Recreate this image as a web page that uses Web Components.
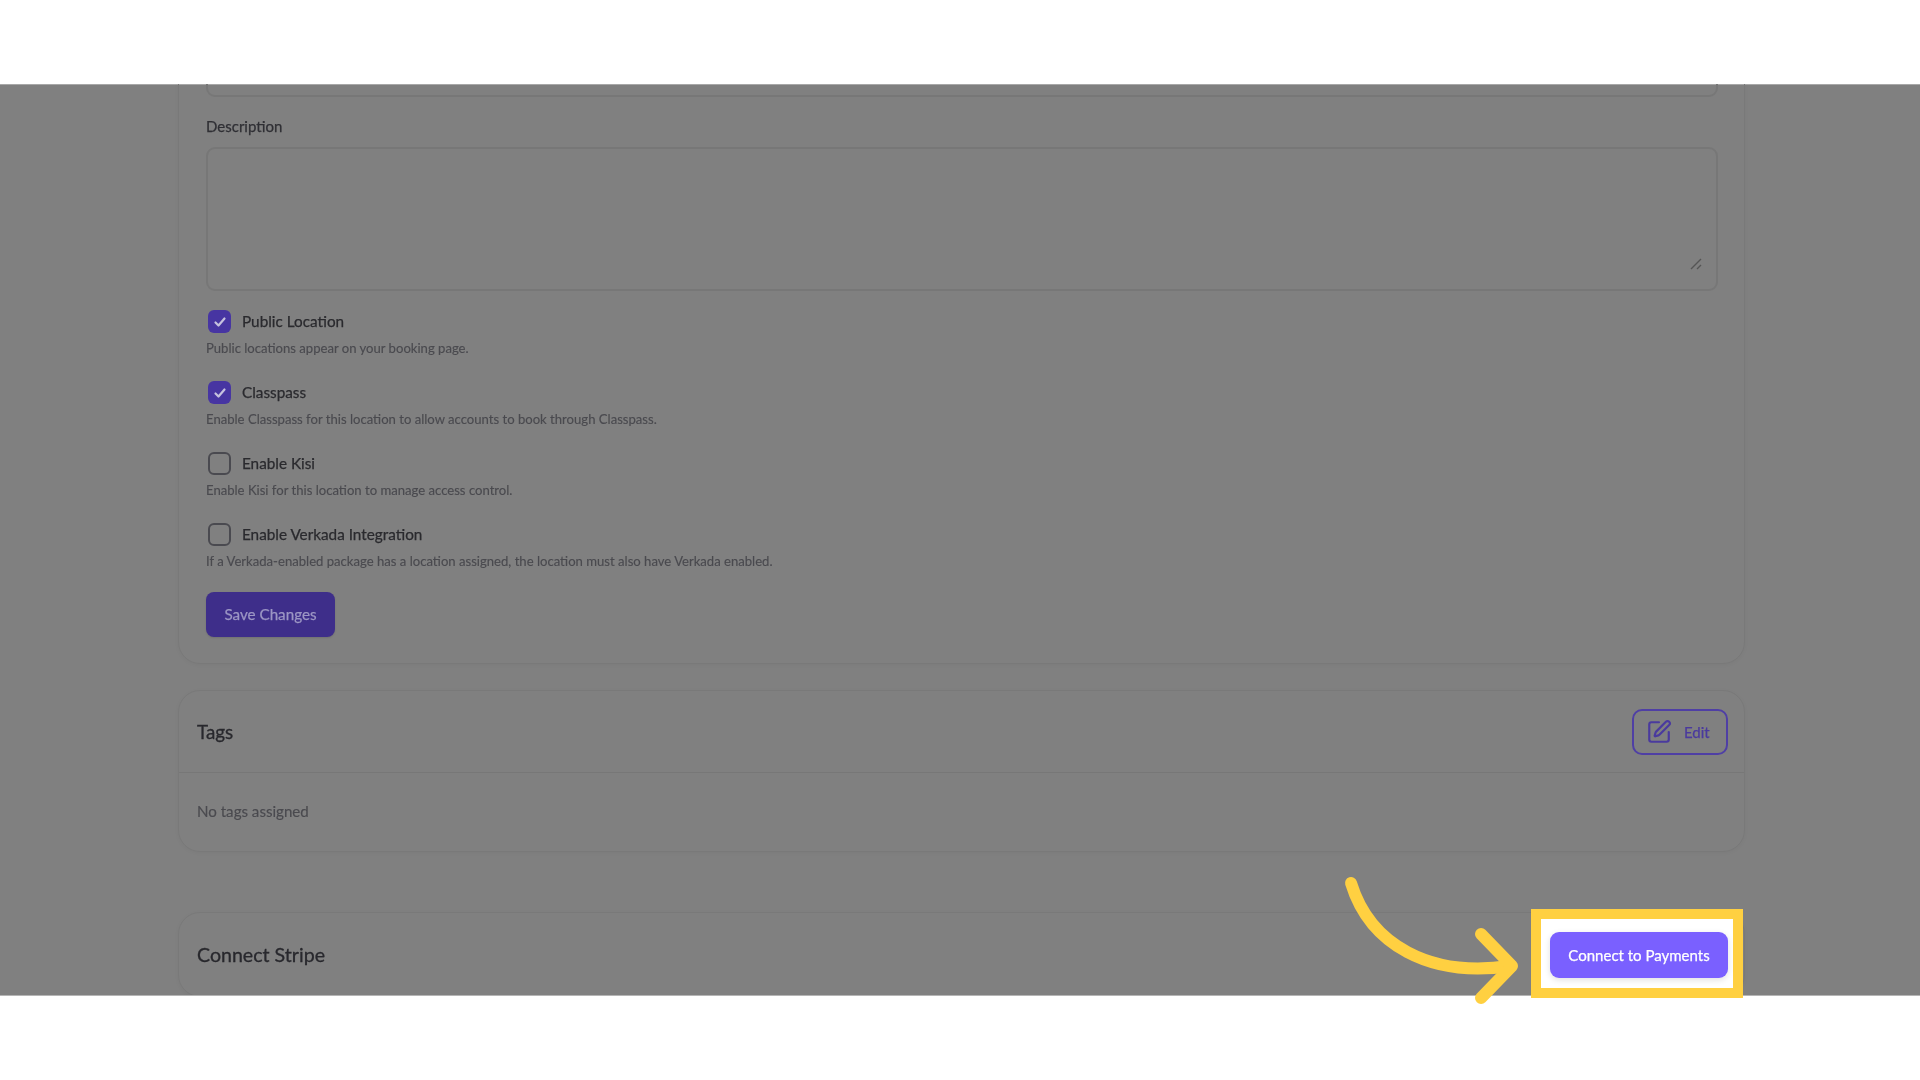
<!DOCTYPE html>
<html>
<head>
<meta charset="utf-8">
<title>Location settings</title>
<style>
    html, body { margin: 0; padding: 0; background: #fff; }
    body { font-family: 'Lato', 'Liberation Sans', sans-serif; }
</style>
</head>
<body>
<app-frame>
    <settings-card first>
        <text-field></text-field>
        <area-field label="Description"></area-field>
        <check-row checked label="Public Location" hint="Public locations appear on your booking page." style="margin-top:19px"></check-row>
        <check-row checked label="Classpass" hint="Enable Classpass for this location to allow accounts to book through Classpass."></check-row>
        <check-row label="Enable Kisi" hint="Enable Kisi for this location to manage access control."></check-row>
        <check-row label="Enable Verkada Integration" hint="If a Verkada-enabled package has a location assigned, the location must also have Verkada enabled."></check-row>
        <save-button>Save Changes</save-button>
    </settings-card>
    <section-card heading="Tags" style="margin-top:26px">
        <edit-button slot="action">Edit</edit-button>
        No tags assigned
    </section-card>
    <section-card heading="Connect Stripe" big style="margin-top:60px"></section-card>
    <tour-spotlight slot="overlay">Connect to Payments</tour-spotlight>
</app-frame>

<script>
class AppFrame extends HTMLElement {
    constructor() {
        super();
        this.attachShadow({ mode: 'open' });
        this.shadowRoot.innerHTML = `
            <style>
                :host {
                    display: flex;
                    flex-direction: column;
                    position: relative;
                    width: 1920px;
                    height: 1080px;
                    overflow: hidden;
                    background: #fff;
                }
                .gap-top { height: 84px; flex: none; }
                .dim {
                    height: 911px;
                    flex: none;
                    overflow: hidden;
                    background: #808080;
                    box-shadow: inset 0 1px 0 #a8a8a8, 0 1px 0 #b5b5b5;
                    padding: 0 175px 0 178px;
                    box-sizing: border-box;
                    filter: blur(0.7px);
                }
            </style>
            <div class="gap-top"></div>
            <div class="dim"><slot></slot></div>
            <slot name="overlay"></slot>
        `;
    }
}

class SettingsCard extends HTMLElement {
    constructor() {
        super();
        this.attachShadow({ mode: 'open' });
        this.shadowRoot.innerHTML = `
            <style>
                :host {
                    display: block;
                    margin-top: -60px;
                    padding: 26px 26px 26px 27px;
                    border: 1px solid #797979;
                    border-radius: 22px;
                    box-shadow: 0 1px 4px rgba(0,0,0,0.04);
                }
            </style>
            <slot></slot>
        `;
    }
}

class TextField extends HTMLElement {
    constructor() {
        super();
        this.attachShadow({ mode: 'open' });
        this.shadowRoot.innerHTML = `
            <style>
                :host {
                    display: block;
                    height: 46px;
                    box-sizing: border-box;
                    border: 2px solid #777;
                    border-radius: 9px;
                }
            </style>
        `;
    }
}

class AreaField extends HTMLElement {
    constructor() {
        super();
        this.attachShadow({ mode: 'open' });
        this.shadowRoot.innerHTML = `
            <style>
                :host { display: block; margin-top: 19px; }
                label {
                    display: block;
                    font-size: 15px;
                    line-height: 20px;
                    color: #2f2f34;
                    -webkit-text-stroke: 0.25px currentColor;
                }
                .box {
                    display: flex;
                    align-items: flex-end;
                    justify-content: flex-end;
                    height: 144px;
                    margin-top: 11px;
                    padding: 0 14px 19px 0;
                    box-sizing: border-box;
                    border: 2px solid #777;
                    border-radius: 9px;
                }
                svg { display: block; }
            </style>
            <label></label>
            <div class="box">
                <svg width="12" height="12" viewBox="0 0 12 12" fill="none" stroke="#555" stroke-width="1.4">
                    <path d="M1 11 11 1M7 11l4-4"/>
                </svg>
            </div>
        `;
        this.shadowRoot.querySelector('label').textContent = this.getAttribute('label');
    }
}

class CheckRow extends HTMLElement {
    constructor() {
        super();
        this.attachShadow({ mode: 'open' });
        const checked = this.hasAttribute('checked');
        this.shadowRoot.innerHTML = `
            <style>
                :host { display: block; margin-top: 24px; }
                .row { display: flex; align-items: center; gap: 11px; padding-left: 2px; height: 23px; }
                .box {
                    width: 23px;
                    height: 23px;
                    box-sizing: border-box;
                    border-radius: 6px;
                    display: flex;
                    align-items: center;
                    justify-content: center;
                    flex: none;
                }
                .box.on { background: #4735a2; }
                .box.off { border: 2px solid #4a4a50; }
                .label {
                    padding-bottom: 2px;
                    font-size: 15.3px;
                    color: #2a2a2e;
                    -webkit-text-stroke: 0.25px currentColor;
                }
                .hint {
                    margin-top: 6px;
                    font-size: 13.1px;
                    line-height: 18px;
                    color: #4a4a4f;
                    -webkit-text-stroke: 0.15px currentColor;
                }
            </style>
            <div class="row">
                <div class="box ${checked ? 'on' : 'off'}">
                    ${checked ? `<svg width="14" height="14" viewBox="0 0 14 14" fill="none" stroke="#c6c2de" stroke-width="2.2" stroke-linecap="round" stroke-linejoin="round"><path d="M2.5 7.5 5.5 10.5 11.5 3.5"/></svg>` : ''}
                </div>
                <span class="label"></span>
            </div>
            <div class="hint"></div>
        `;
        this.shadowRoot.querySelector('.label').textContent = this.getAttribute('label');
        this.shadowRoot.querySelector('.hint').textContent = this.getAttribute('hint');
    }
}

class SaveButton extends HTMLElement {
    constructor() {
        super();
        this.attachShadow({ mode: 'open' });
        this.shadowRoot.innerHTML = `
            <style>
                :host {
                    display: flex;
                    align-items: center;
                    justify-content: center;
                    width: 129px;
                    height: 45px;
                    box-sizing: border-box;
                    padding-bottom: 2px;
                    margin-top: 22px;
                    border-radius: 8px;
                    background: #3e2e8a;
                    color: #9c96c4;
                    font-size: 15.2px;
                    -webkit-text-stroke: 0.25px currentColor;
                    box-shadow: 0 1px 2px rgba(0,0,0,0.12);
                }
            </style>
            <slot></slot>
        `;
    }
}

class SectionCard extends HTMLElement {
    constructor() {
        super();
        this.attachShadow({ mode: 'open' });
        const big = this.hasAttribute('big');
        this.shadowRoot.innerHTML = `
            <style>
                :host {
                    display: block;
                    border: 1px solid #797979;
                    border-radius: 22px;
                    box-shadow: 0 1px 4px rgba(0,0,0,0.04);
                }
                header {
                    display: flex;
                    align-items: center;
                    justify-content: space-between;
                    height: ${big ? '83px' : '81px'};
                    padding: 0 16px 0 18px;
                }
                h2 {
                    margin: 0;
                    font-size: ${big ? '19.6px' : '18.8px'};
                    font-weight: 400;
                    color: #28282d;
                    -webkit-text-stroke: 0.3px currentColor;
                }
                .body {
                    display: ${big ? 'none' : 'flex'};
                    align-items: center;
                    height: 79px;
                    padding: 0 18px 2px;
                    box-sizing: border-box;
                    border-top: 1px solid #777;
                    font-size: 15.1px;
                    color: #4a4a4f;
                    -webkit-text-stroke: 0.15px currentColor;
                }
            </style>
            <header>
                <h2></h2>
                <slot name="action"></slot>
            </header>
            <div class="body"><slot></slot></div>
        `;
        this.shadowRoot.querySelector('h2').textContent = this.getAttribute('heading');
    }
}

class EditButton extends HTMLElement {
    constructor() {
        super();
        this.attachShadow({ mode: 'open' });
        this.shadowRoot.innerHTML = `
            <style>
                :host {
                    display: flex;
                    align-items: center;
                    gap: 12px;
                    width: 96px;
                    height: 46px;
                    box-sizing: border-box;
                    padding-left: 12px;
                    border: 2px solid #4f3fa5;
                    border-radius: 10px;
                    color: #4a3a9e;
                    font-size: 15px;
                    -webkit-text-stroke: 0.25px currentColor;
                }
                svg { display: block; flex: none; }
            </style>
            <svg width="26" height="26" viewBox="0 0 24 24" fill="none" stroke="currentColor" stroke-width="2" stroke-linecap="round" stroke-linejoin="round">
                <path d="M12 3H5a2 2 0 0 0-2 2v14a2 2 0 0 0 2 2h14a2 2 0 0 0 2-2v-7"/>
                <path d="M18.375 2.625a1 1 0 0 1 3 3l-9.013 9.014a2 2 0 0 1-.853.505l-2.873.84a.5.5 0 0 1-.62-.62l.84-2.873a2 2 0 0 1 .506-.852z"/>
            </svg>
            <slot></slot>
        `;
    }
}

class TourSpotlight extends HTMLElement {
    constructor() {
        super();
        this.attachShadow({ mode: 'open' });
        this.shadowRoot.innerHTML = `
            <style>
                :host { display: contents; }
                .frame {
                    position: absolute;
                    left: 1531px;
                    top: 909px;
                    width: 212px;
                    height: 89px;
                    box-sizing: border-box;
                    border: 10px solid #ffd041;
                    background: #fff;
                    padding: 13px 5px 0 9px;
                }
                .btn {
                    display: flex;
                    align-items: center;
                    justify-content: center;
                    height: 46px;
                    border-radius: 9px;
                    background: #7a60ff;
                    color: #fff;
                    font-size: 15px;
                    -webkit-text-stroke: 0.25px currentColor;
                    box-shadow: 0 2px 6px rgba(0,0,0,0.12);
                    filter: blur(0.4px);
                }
                svg { position: absolute; left: 1340px; top: 870px; }
            </style>
            <svg width="190" height="140" viewBox="1340 870 190 140" fill="none" stroke="#ffd041" stroke-width="12" stroke-linecap="round" stroke-linejoin="round">
                <path d="M1351 883C1370 945 1430 978 1510 966"/>
                <path d="M1481 934 1512 966 1481 998"/>
            </svg>
            <div class="frame"><div class="btn"><slot></slot></div></div>
        `;
    }
}

customElements.define('app-frame', AppFrame);
customElements.define('settings-card', SettingsCard);
customElements.define('text-field', TextField);
customElements.define('area-field', AreaField);
customElements.define('check-row', CheckRow);
customElements.define('save-button', SaveButton);
customElements.define('section-card', SectionCard);
customElements.define('edit-button', EditButton);
customElements.define('tour-spotlight', TourSpotlight);
</script>
</body>
</html>
